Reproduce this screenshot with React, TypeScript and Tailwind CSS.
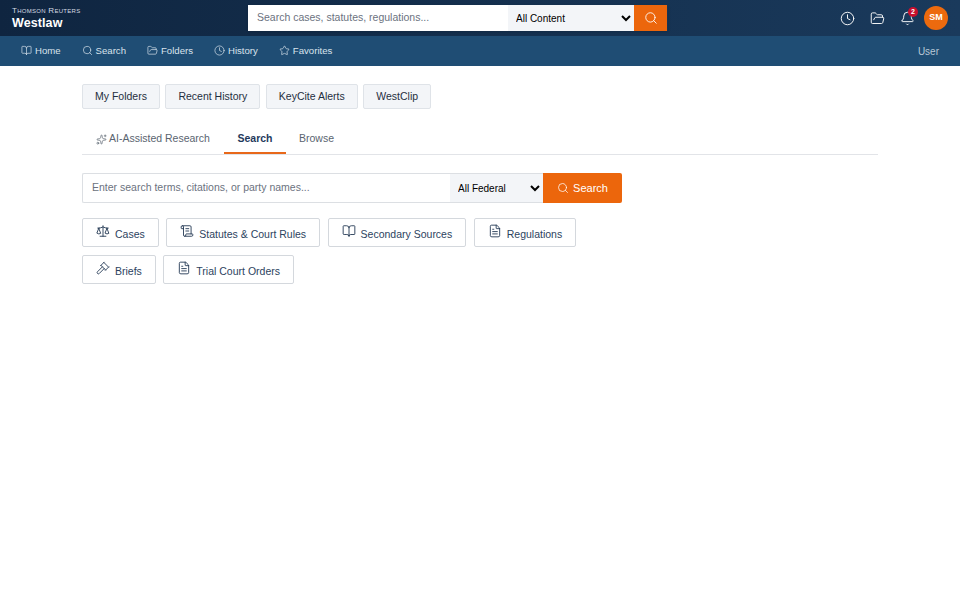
import { BookOpen, Bell, Clock, FileText, FolderOpen, Gavel, Scale, ScrollText, Search, Sparkles, Star } from "lucide-react";

const navItems = [
  { label: "Home", icon: BookOpen },
  { label: "Search", icon: Search },
  { label: "Folders", icon: FolderOpen },
  { label: "History", icon: Clock },
  { label: "Favorites", icon: Star },
];

const quickLinks = ["My Folders", "Recent History", "KeyCite Alerts", "WestClip"];

const categories = [
  [
    { label: "Cases", icon: Scale },
    { label: "Statutes & Court Rules", icon: ScrollText },
    { label: "Secondary Sources", icon: BookOpen },
    { label: "Regulations", icon: FileText },
  ],
  [
    { label: "Briefs", icon: Gavel },
    { label: "Trial Court Orders", icon: FileText },
  ],
];

export default function App() {
  return (
    <div className="min-h-[600px] bg-white font-['Liberation_Sans',Arial,sans-serif] text-[10.5px]">
      <header className="h-[36px] bg-gradient-to-r from-[#0f2540] to-[#1a3a5c] flex items-center pl-3 pr-3">
        <div className="w-[236px] text-white -mt-[1px]">
          <div className="text-[8px] leading-[9px] tracking-[0.28px] text-[#d5dbe2] [font-variant:small-caps]">Thomson Reuters</div>
          <div className="mt-[1px] text-[12.5px] leading-[14px] font-bold tracking-[0.1px]">Westlaw</div>
        </div>
        <div className="flex h-[26px] w-[420px] overflow-hidden shadow">
          <input
            className="w-[260px] bg-white px-[9px] text-[10.5px] text-gray-900 placeholder:text-[#6b7280] outline-none"
            placeholder="Search cases, statutes, regulations..."
          />
          <select className="w-[126px] bg-[#f3f5f8] pl-[4px] text-[10px] text-black outline-none">
            <option>All Content</option>
          </select>
          <button className="w-[33px] bg-[#ec660c] flex items-center justify-center text-white">
            <Search size={14} strokeWidth={1.5} />
          </button>
        </div>
        <div className="ml-auto flex items-center">
          <Clock size={15} strokeWidth={1.5} className="text-white -ml-[1px]" />
          <FolderOpen size={15} strokeWidth={1.5} className="text-white ml-[15px]" />
          <div className="relative ml-[15px]">
            <Bell size={15} strokeWidth={1.5} className="text-white" />
            <span className="absolute -top-[4px] -right-[3px] w-[10px] h-[10px] rounded-full bg-[#c8102e] text-white text-[7px] font-bold leading-[10px] text-center">2</span>
          </div>
          <div className="ml-[9px] w-6 h-6 rounded-full bg-[#ec6a0e] text-white text-[9px] font-bold flex items-center justify-center">SM</div>
        </div>
      </header>

      <nav className="h-[30px] bg-[#1f4d74] flex items-center pl-[21px] pr-[21px] text-[#d9e3ec] text-[9.6px]">
        <div className="flex items-center gap-[21px]">
          {navItems.map((item) => (
            <a key={item.label} className="flex items-center gap-[3px]">
              <item.icon size={11} strokeWidth={1.5} />
              {item.label}
            </a>
          ))}
        </div>
        <span className="ml-auto text-[10px] text-[#b8c8d6]">User</span>
      </nav>

      <main className="px-[82px] pt-[18px]">
        <div className="flex gap-[5.5px]">
          {quickLinks.map((link) => (
            <button key={link} className="h-[25px] px-[12px] bg-[#f3f5f8] border border-[#dfe3e8] rounded-[2px] text-[#1f2f40]">
              {link}
            </button>
          ))}
        </div>

        <div className="mt-[18px] flex border-b border-[#e2e4e8] h-[28px]">
          <div className="flex items-center gap-[2px] pl-[14px] pr-[14px] pb-[3px] text-[#5a6470]">
            <Sparkles size={11} strokeWidth={1.5} />
            AI-Assisted Research
          </div>
          <div className="flex items-center px-[13.5px] pb-[1px] font-bold text-[#1f3a5c] border-b-2 border-[#e8681a] h-[27px]">Search</div>
          <div className="flex items-center px-[13px] pb-[3px] text-[#5a6470]">Browse</div>
        </div>

        <div className="mt-[18px] flex h-[30px] w-[540px]">
          <input
            className="w-[368px] border border-[#dcdfe3] border-r-0 rounded-l-[2px] px-[9px] text-[10.5px] placeholder:text-[#6b7280] outline-none"
            placeholder="Enter search terms, citations, or party names..."
          />
          <select className="w-[93px] bg-[#f3f5f8] pl-[4px] border-y border-[#dcdfe3] text-[10px] text-black outline-none">
            <option>All Federal</option>
          </select>
          <button className="w-[79px] bg-[#ec660c] rounded-r-[2px] flex items-center justify-center gap-[4px] text-white text-[11px]">
            <Search size={12} strokeWidth={1.5} />
            Search
          </button>
        </div>

        <div className="mt-[14.5px] flex flex-col gap-[7.5px]">
          {categories.map((row, i) => (
            <div key={i} className="flex gap-[7.5px]">
              {row.map((cat) => (
                <button key={cat.label} className="h-[29.5px] px-[13px] flex items-center gap-[5px] bg-white border border-[#d4d8dd] rounded-[2px] text-[#2c4360]">
                  <cat.icon size={14} strokeWidth={1.5} className="-mt-[3px] text-[#1f3550]" />
                  <span className="mt-[5.5px]">{cat.label}</span>
                </button>
              ))}
            </div>
          ))}
        </div>
      </main>
    </div>
  );
}
